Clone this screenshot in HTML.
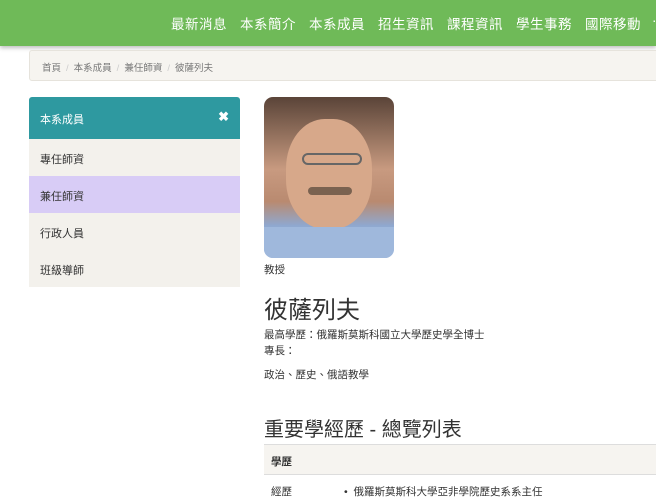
<!DOCTYPE html>
<html><head><meta charset="utf-8"><style>
*{margin:0;padding:0;box-sizing:border-box}
body{width:656px;height:497px;overflow:hidden;background:#fff;font-family:"Liberation Sans","Noto Sans CJK TC",sans-serif;color:#333;position:relative}
.nav{position:absolute;left:0;top:0;width:656px;height:46px;background:#6fba58;box-shadow:0 2px 4px rgba(0,0,0,.25)}
.nav span{position:absolute;top:13px;color:#fff;font-size:13.5px;letter-spacing:.5px}
.bc{position:absolute;left:29px;top:50px;width:640px;height:31px;background:#f6f4f0;border:1px solid #e6e3dc;border-radius:3px;font-size:9.5px;color:#777;padding:9px 12px}
.bc i{font-style:normal;color:#ccc;margin:0 5px}
.side{position:absolute;left:29px;top:97px;width:211px}
.sh{height:42px;background:#2e99a0;color:#fff;font-size:11px;padding:14px 11px;border-radius:3px 3px 0 0;position:relative}
.sh b{position:absolute;right:11px;top:12px;font-size:13px}
.it{height:37px;background:#f3f1ec;font-size:11px;padding:12px 11px;color:#333}
.it.a{background:#d8ccf6}
.photo{position:absolute;left:264px;top:97px;width:130px;height:161px;border-radius:9px;overflow:hidden;background:linear-gradient(180deg,#5a4438 0%,#8a6a58 20%,#c89a80 45%,#b98a70 65%,#8fa8d0 80%,#a9c0e0 100%)}
.t{position:absolute;font-size:10.5px;color:#333}
</style></head><body>
<div class="nav">
<span style="left:171px">最新消息</span><span style="left:240px">本系簡介</span><span style="left:309px">本系成員</span><span style="left:378px">招生資訊</span><span style="left:447px">課程資訊</span><span style="left:516px">學生事務</span><span style="left:585px">國際移動</span><span style="left:652px">·</span>
</div>
<div class="bc">首頁<i>/</i>本系成員<i>/</i>兼任師資<i>/</i>彼薩列夫</div>
<div class="side">
<div class="sh">本系成員<b>✖</b></div>
<div class="it">專任師資</div>
<div class="it a">兼任師資</div>
<div class="it">行政人員</div>
<div class="it">班級導師</div>
</div>
<div class="photo">
<div style="position:absolute;left:22px;top:22px;width:86px;height:110px;border-radius:45%;background:#d7a88a"></div>
<div style="position:absolute;left:38px;top:56px;width:60px;height:12px;border:2px solid #666;border-radius:6px"></div>
<div style="position:absolute;left:44px;top:90px;width:44px;height:8px;background:#7a6250;border-radius:4px"></div>
<div style="position:absolute;left:0;top:130px;width:130px;height:31px;background:#9fb8dc"></div>
</div>
<div class="t" style="left:264px;top:262px">教授</div>
<div class="t" style="left:264px;top:290px;font-size:24px;color:#333">彼薩列夫</div>
<div class="t" style="left:264px;top:327px">最高學歷：俄羅斯莫斯科國立大學歷史學全博士</div>
<div class="t" style="left:264px;top:343px">專長：</div>
<div class="t" style="left:264px;top:367px">政治、歷史、俄語教學</div>
<div class="t" style="left:264px;top:413px;font-size:20px">重要學經歷 - 總覽列表</div>
<div style="position:absolute;left:264px;top:444px;width:400px;height:31px;background:#f6f4f0;border-top:1px solid #ddd;border-bottom:1px solid #ddd"></div>
<div class="t" style="left:271px;top:454px;font-weight:bold">學歷</div>
<div class="t" style="left:271px;top:484px">經歷</div>
<div class="t" style="left:344px;top:484px">•&nbsp;&nbsp;俄羅斯莫斯科大學亞非學院歷史系系主任</div>
</body></html>
